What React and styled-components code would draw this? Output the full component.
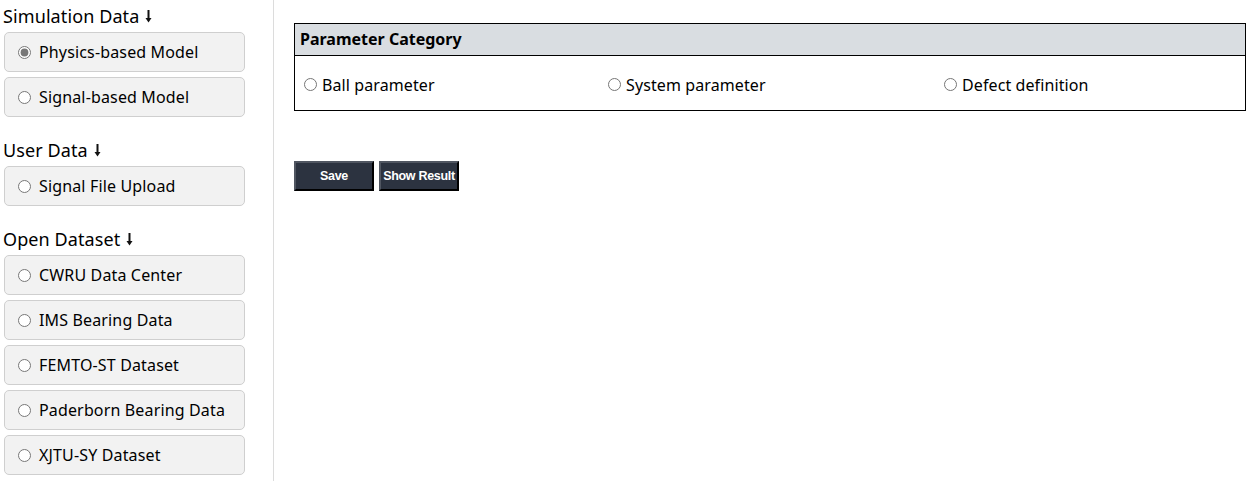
import React from "react";
import styled, { createGlobalStyle } from "styled-components";

const GlobalStyle = createGlobalStyle`
  html, body {
    margin: 0;
    padding: 0;
    background: #fff;
  }
  body {
    font-family: "Noto Sans", "Open Sans", sans-serif;
    color: #000;
  }
`;

const groups = [
  { title: "Simulation Data", items: ["Physics-based Model", "Signal-based Model"] },
  { title: "User Data", items: ["Signal File Upload"] },
  {
    title: "Open Dataset",
    items: [
      "CWRU Data Center",
      "IMS Bearing Data",
      "FEMTO-ST Dataset",
      "Paderborn Bearing Data",
      "XJTU-SY Dataset",
    ],
  },
];

const categories = [
  { label: "Ball parameter", width: "304px" },
  { label: "System parameter", width: "336px" },
  { label: "Defect definition", width: "1fr" },
];

function DownArrow() {
  return (
    <svg width="7" height="13" viewBox="0 0 7 13">
      <rect x="2.5" y="0" width="2" height="9" fill="#111" />
      <path d="M0.5 8 L6.5 8 L3.5 12.5 Z" fill="#111" />
    </svg>
  );
}

export default function App() {
  const [source, setSource] = React.useState("Physics-based Model");
  const [category, setCategory] = React.useState("");

  return (
    <Page>
      <GlobalStyle />
      <Sidebar>
        {groups.map((g) => (
          <Group key={g.title}>
            <GroupTitle>
              {g.title}
              <DownArrow />
            </GroupTitle>
            {g.items.map((item) => (
              <OptionBtn key={item} onClick={() => setSource(item)}>
                <Radio checked={source === item} readOnly />
                {item}
              </OptionBtn>
            ))}
          </Group>
        ))}
      </Sidebar>

      <Main>
        <Table>
          <TableHead>Parameter Category</TableHead>
          <TableBody $cols={categories.map((c) => c.width).join(" ")}>
            {categories.map((c) => (
              <Choice key={c.label}>
                <SmallRadio
                  name="cat"
                  checked={category === c.label}
                  onChange={() => setCategory(c.label)}
                />
                {c.label}
              </Choice>
            ))}
          </TableBody>
        </Table>

        <Actions>
          <DarkBtn>Save</DarkBtn>
          <DarkBtn>Show Result</DarkBtn>
        </Actions>
      </Main>
    </Page>
  );
}

const Page = styled.div`
  display: flex;
  height: 481px;
`;

const Sidebar = styled.div`
  width: 274px;
  flex-shrink: 0;
  box-sizing: border-box;
  border-right: 1px solid #dcdcdc;
  padding: 4px 0 0 3px;
`;

const Group = styled.div`
  margin-bottom: 21px;
`;

const GroupTitle = styled.div`
  font-size: 18px;
  line-height: 24px;
  height: 24px;
  margin-bottom: 4px;
  display: flex;
  align-items: center;
  gap: 6px;
  letter-spacing: 0.1px;

  svg {
    margin-top: 1px;
  }
`;

const OptionBtn = styled.div`
  width: 241px;
  height: 40px;
  box-sizing: border-box;
  margin: 0 0 5px 1px;
  background: #f2f2f2;
  border: 1px solid #cfcfcf;
  border-radius: 5px;
  display: flex;
  align-items: center;
  padding-left: 13px;
  font-size: 16px;
  cursor: pointer;
  letter-spacing: 0.15px;
`;

const Radio = styled.input.attrs({ type: "radio" })`
  width: 13px;
  height: 13px;
  margin: 0 8px 0 0;
  accent-color: #777;
`;

const Main = styled.div`
  flex: 1;
  padding: 23px 8px 0 20px;
`;

const Table = styled.div`
  border: 1px solid #000;
  width: 952px;
  box-sizing: border-box;
`;

const TableHead = styled.div`
  height: 31px;
  background: #d9dde1;
  border-bottom: 1px solid #000;
  font-weight: bold;
  font-size: 16px;
  line-height: 31px;
  padding-left: 5px;
`;

const TableBody = styled.div`
  display: grid;
  grid-template-columns: ${(p) => p.$cols};
  height: 54px;
  align-items: center;
  padding: 3px 0 0 9px;
  box-sizing: border-box;
`;

const Choice = styled.label`
  display: flex;
  align-items: center;
  font-size: 16px;
  letter-spacing: 0.1px;
`;

const SmallRadio = styled.input.attrs({ type: "radio" })`
  width: 13px;
  height: 13px;
  margin: 0 5px 0 0;
`;

const Actions = styled.div`
  display: flex;
  gap: 5px;
  margin-top: 50px;
`;

const DarkBtn = styled.button`
  height: 30px;
  width: 80px;
  padding: 0;
  background: #2c3340;
  color: #fff;
  font-family: "Liberation Sans", Arial, sans-serif;
  font-weight: bold;
  font-size: 12.5px;
  letter-spacing: -0.3px;
  white-space: nowrap;
  border: 2px solid;
  border-color: #505661 #000 #000 #505661;
  cursor: pointer;
`;
